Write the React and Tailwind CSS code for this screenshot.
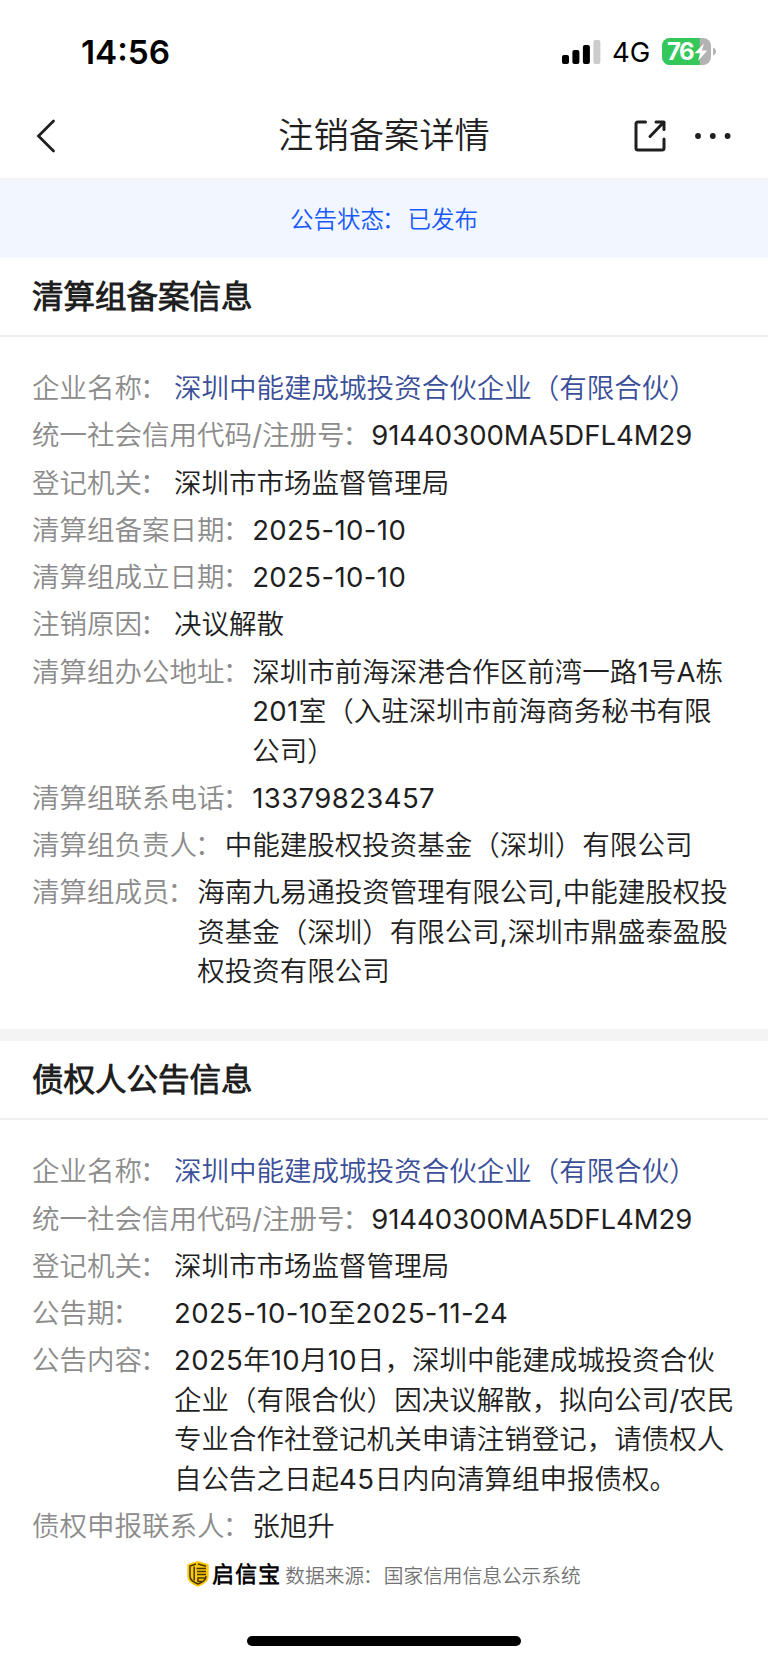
import React from 'react';

const filing = [
    { label: '企业名称', lines: ['深圳中能建成城投资合伙企业（有限合伙）'], link: true },
    { label: '统一社会信用代码/注册号', lines: ['91440300MA5DFL4M29'], code: true },
    { label: '登记机关', lines: ['深圳市市场监督管理局'] },
    { label: '清算组备案日期', lines: ['2025-10-10'] },
    { label: '清算组成立日期', lines: ['2025-10-10'] },
    { label: '注销原因', lines: ['决议解散'] },
    {
        label: '清算组办公地址',
        lines: ['深圳市前海深港合作区前湾一路1号A栋', '201室（入驻深圳市前海商务秘书有限', '公司）'],
    },
    { label: '清算组联系电话', lines: ['13379823457'] },
    { label: '清算组负责人', lines: ['中能建股权投资基金（深圳）有限公司'] },
    {
        label: '清算组成员',
        lines: ['海南九易通投资管理有限公司,中能建股权投', '资基金（深圳）有限公司,深圳市鼎盛泰盈股', '权投资有限公司'],
    },
];

const notice = [
    { label: '企业名称', lines: ['深圳中能建成城投资合伙企业（有限合伙）'], link: true },
    { label: '统一社会信用代码/注册号', lines: ['91440300MA5DFL4M29'], code: true },
    { label: '登记机关', lines: ['深圳市市场监督管理局'] },
    { label: '公告期', lines: ['2025-10-10至2025-11-24'] },
    {
        label: '公告内容',
        lines: [
            '2025年10月10日，深圳中能建成城投资合伙',
            '企业（有限合伙）因决议解散，拟向公司/农民',
            '专业合作社登记机关申请注销登记，请债权人',
            '自公告之日起45日内向清算组申报债权。',
        ],
    },
    { label: '债权申报联系人', lines: ['张旭升'] },
];

const StatusBar = () => (
    <div className="flex h-[92px] items-center justify-between pt-[11px] pr-[51px] pl-[81px] text-black">
        <span className="pt-[2px] text-[33.3px] leading-none font-semibold">14:56</span>
        <div className="flex items-center">
            <svg width="39" height="24" viewBox="0 0 39 24">
                <rect x="0" y="15" width="7" height="9" rx="2" />
                <rect x="10.4" y="10" width="7" height="14" rx="2" />
                <rect x="20.9" y="5" width="7" height="19" rx="2" />
                <rect x="31.4" y="0" width="7" height="24" rx="2" fill="#cccccc" />
            </svg>
            <span className="ml-[11px] w-[50px] pt-[2px] text-[27.5px] leading-none">4G</span>
            <div className="relative h-[27px] w-[55px]">
                <svg width="55" height="27" viewBox="0 0 55 27">
                    <defs>
                        <clipPath id="battery">
                            <rect width="49" height="27" rx="8" />
                        </clipPath>
                    </defs>
                    <g clipPath="url(#battery)">
                        <rect width="49" height="27" fill="#b3b3b3" />
                        <rect width="37.7" height="27" fill="#34c759" />
                    </g>
                    <path d="M51 9.5c1.9.8 3 2.2 3 4s-1.1 3.2-3 4z" fill="#b3b3b3" />
                    <path d="M42 5.5 32.5 15.2h5.6l-2 7.8 9.2-10.5h-5.5z" fill="#fff" />
                </svg>
                <span className="absolute top-[2px] left-[5px] text-[24px] leading-[24px] font-bold tracking-[-1.5px] text-white">76</span>
            </div>
        </div>
    </div>
);

const NavBar = () => (
    <div className="grid h-[88px] grid-cols-[1fr_auto_1fr] items-center border-b-2 border-[#f2f2f2] pt-[2px] text-[#1f1f1f]">
        <svg className="ml-[35px]" width="22" height="36" viewBox="0 0 22 36" fill="none" stroke="currentColor" strokeWidth="2.8" strokeLinecap="round">
            <path d="M18.5 3 3.5 18l15 15" />
        </svg>
        <h1 className="text-[35.3px] leading-none">注销备案详情</h1>
        <div className="flex items-center justify-end pr-[37px]">
            <svg width="32" height="32" viewBox="0 0 32 32" fill="none" stroke="currentColor" strokeWidth="3" strokeLinecap="round" strokeLinejoin="round">
                <path d="M11.5 2H4a2 2 0 0 0-2 2v24a2 2 0 0 0 2 2h24a2 2 0 0 0 2-2v-9M22 2h8v7.5M29 3 16 16.5" />
            </svg>
            <svg className="ml-[29px]" width="36" height="6" viewBox="0 0 36 6" fill="currentColor">
                <circle cx="3" cy="3" r="2.9" />
                <circle cx="17.8" cy="3" r="2.9" />
                <circle cx="32.6" cy="3" r="2.9" />
            </svg>
        </div>
    </div>
);

// digits in dates and phone numbers are set slightly wider than the rest
const spaceDigits = (line) =>
    line.split(/(\d[\d-]*)/).map((part, i) =>
        i % 2 ? <span key={i} className="tracking-[0.4px]">{part}</span> : part
    );

const Field = ({ label, lines, link, code }) => (
    <div className="flex">
        <dt className="min-w-[142px] shrink-0 text-[#8c8c8c]">
            {label}
            <span className="mr-[2px] -ml-[2px]">：</span>
        </dt>
        <dd className={`${link ? 'text-[#3b4f99]' : 'text-[#1f1f1f]'} ${code ? '-ml-px tracking-[-0.02px]' : ''}`}>
            {lines.map((line) => (
                <div key={line}>{code ? line : spaceDigits(line)}</div>
            ))}
        </dd>
    </div>
);

const Section = ({ title, fields }) => (
    <section>
        <h2 className="h-[79px] border-b-2 border-[#efefef] pl-[32px] text-[31.5px] leading-[77px] font-bold text-[#1f1f1f]">{title}</h2>
        <dl className="flex flex-col gap-[7.9px] pt-[32px] pl-[32px] text-[27.53px] leading-[39.4px] whitespace-nowrap">
            {fields.map((field) => (
                <Field key={field.label} {...field} />
            ))}
        </dl>
    </section>
);

const Shield = () => (
    <svg width="22" height="26" viewBox="0 0 22 26" className="shrink-0">
        <path d="M11 0 21.7 3.2V15c0 5-4 8-10.7 10.8C4.3 23 .3 20 .3 15V3.2z" fill="#f9c810" />
        <g fill="none" stroke="#4a3500" strokeWidth="1.5">
            <path d="M9 3 3 5v10c0 3.5 2.5 6 8 8 5.5-2 8-4.5 8-8" />
            <path d="M7.2 5.5v14M11 3l8 2.3M9.5 7.5H19M10 10.5h9M10 13.5h9M18 17h-7v3.5h4" />
        </g>
    </svg>
);

export default function App() {
    return (
        <main className="flex h-[1663px] w-[768px] flex-col overflow-hidden bg-white font-['Inter','Noto_Sans_CJK_SC_DemiLight','Noto_Sans_CJK_SC',sans-serif]">
            <StatusBar />
            <NavBar />
            <div className="h-[78px] bg-[#f1f6ff] pt-px text-center text-[23.5px] leading-[78px] text-[#1759ff]">
                公告状态<span className="mr-[2px] -ml-[2px]">：</span>已发布
            </div>
            <Section title="清算组备案信息" fields={filing} />
            <div className="mt-[37.5px] h-[12px] shrink-0 bg-[#f4f4f4]" />
            <Section title="债权人公告信息" fields={notice} />
            <footer className="mt-[10px] flex items-center justify-center">
                <Shield />
                <span className="ml-[3px] text-[21.8px] leading-[30px] font-bold tracking-[1.2px] text-black">启信宝</span>
                <span className="ml-[4px] pt-[5px] text-[19.7px] leading-[30px] text-[#737373]">
                    数据来源<span className="mr-px -ml-px">：</span>国家信用信息公示系统
                </span>
            </footer>
            <div className="mx-auto mt-auto mb-[17px] h-[10px] w-[274px] shrink-0 rounded-full bg-black" />
        </main>
    );
}
